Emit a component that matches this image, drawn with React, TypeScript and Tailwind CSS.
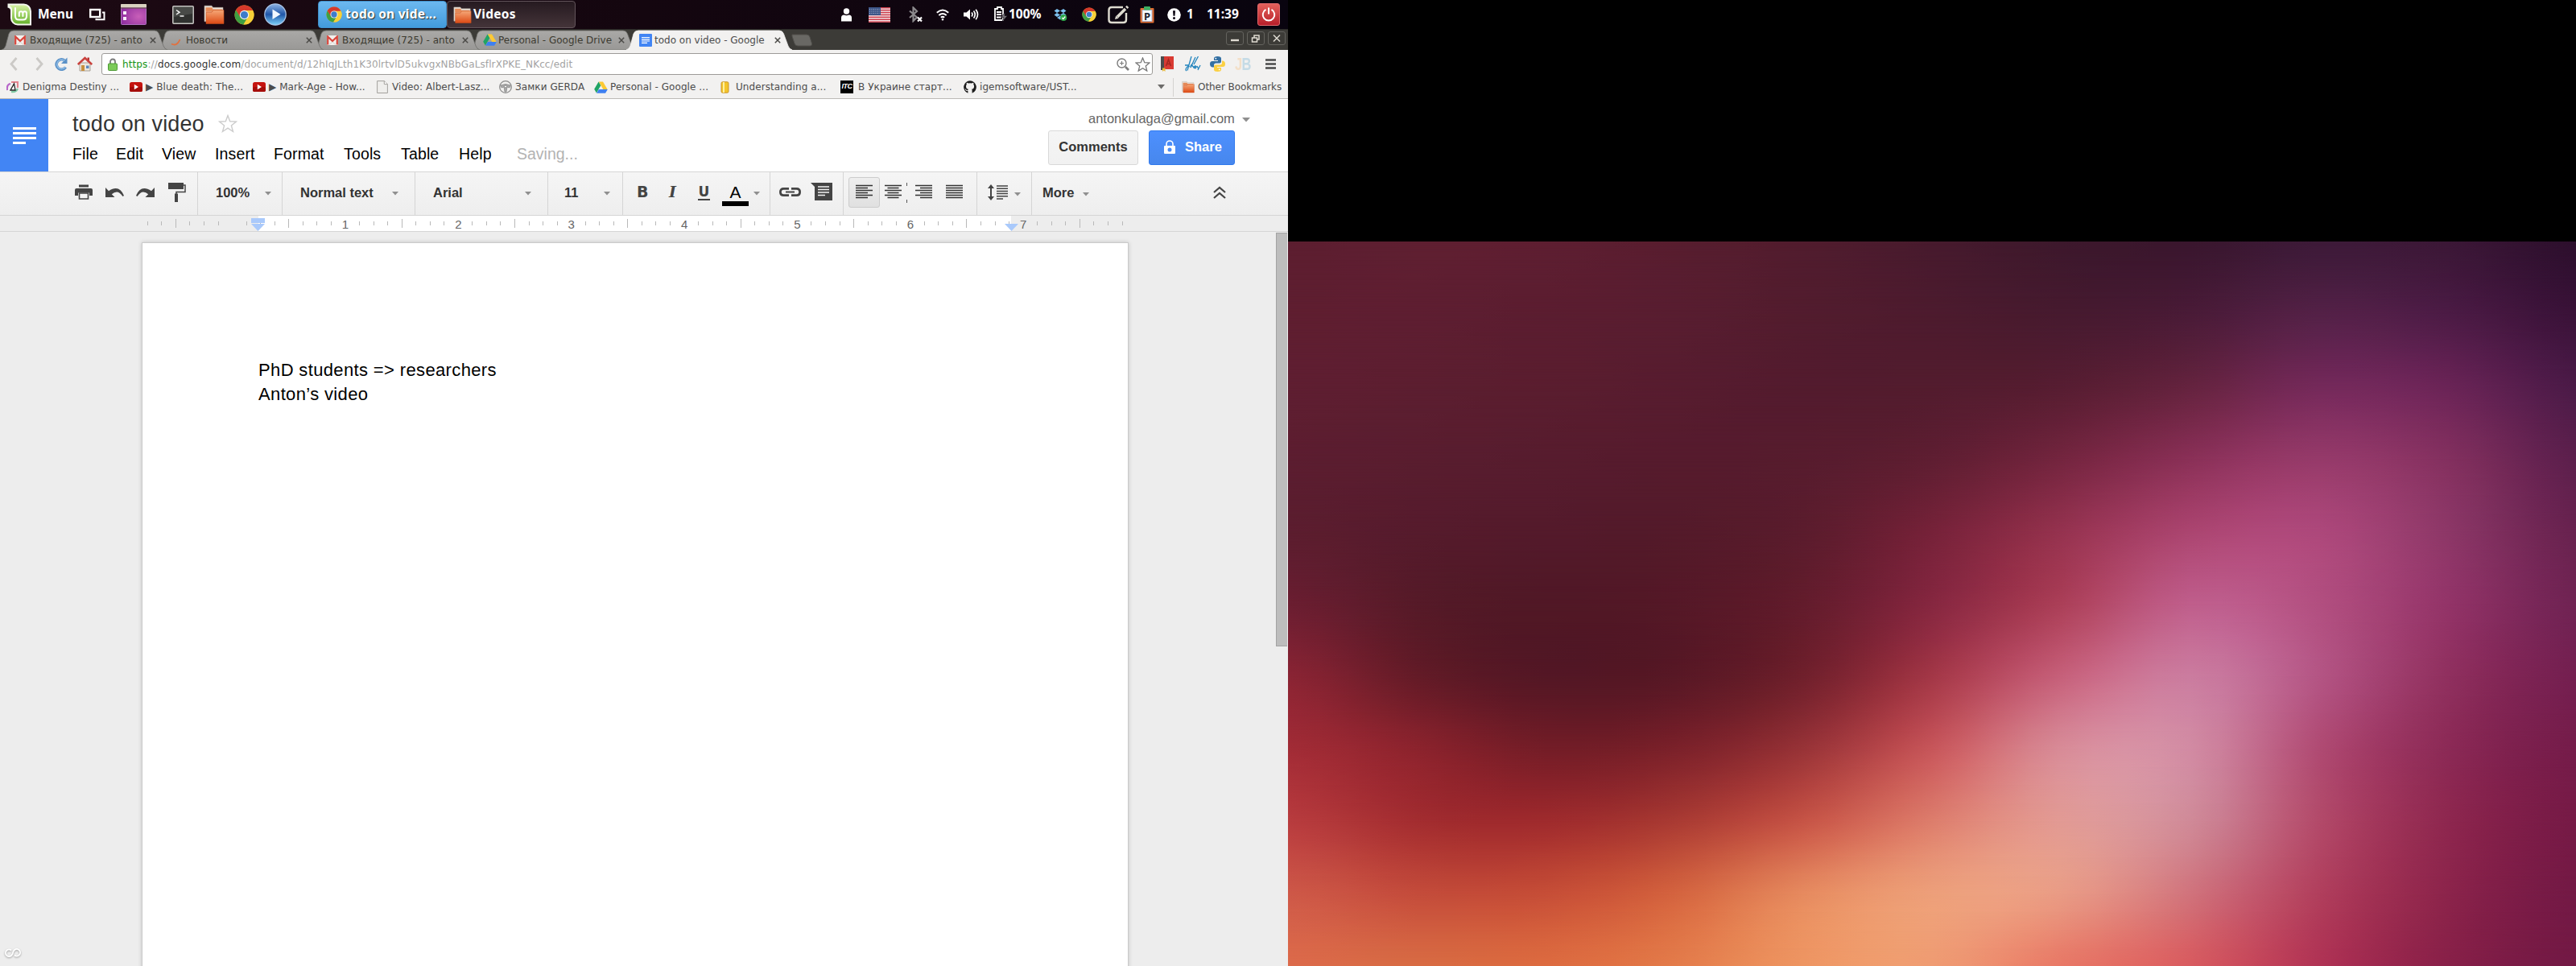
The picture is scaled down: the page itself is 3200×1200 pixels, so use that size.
import React from "react";

/* ---------- wallpaper ---------- */

const WALL: string[][] = [
  ["#5c1e30", "#5f1f31", "#5e1e31", "#581d2f", "#511c2e", "#471a2d", "#3d182c", "#3a162e", "#3d1a38", "#3b1736", "#2d0f2d"],
  ["#5f1e30", "#5e1e31", "#5b1d30", "#581d30", "#521c2e", "#4d1b2e", "#471a2f", "#4a1b37", "#542147", "#4c1b45", "#3a1238"],
  ["#5f1e31", "#5c1e30", "#5a1d2f", "#571c2f", "#531b2e", "#531c2e", "#571d32", "#65233f", "#74295a", "#6a2456", "#4b1a47"],
  ["#5c1d30", "#591d2f", "#571c2e", "#561b2d", "#571c2e", "#5f1e32", "#74253f", "#8a3057", "#963a6a", "#83305f", "#5c1f4c"],
  ["#5c1d2f", "#561b2c", "#541a2b", "#541a2a", "#5b1c2d", "#762239", "#95324f", "#ab4570", "#ad487b", "#8d3767", "#68224f"],
  ["#6b1e31", "#561a28", "#511826", "#551827", "#631c2c", "#862740", "#ab3f58", "#bf5e8b", "#b24f80", "#933468", "#702353"],
  ["#8a2434", "#641b27", "#541725", "#581825", "#70202c", "#a33747", "#c6607a", "#cb7c9f", "#b45584", "#90305f", "#741f50"],
  ["#a22c36", "#8c232d", "#741d27", "#7b212a", "#983337", "#c7565a", "#d88b97", "#d28ba3", "#b04b73", "#8c2a56", "#751c4a"],
  ["#b83c3e", "#a32d30", "#9f2b2d", "#a93a33", "#c65446", "#dd7d6c", "#e29a94", "#d08a98", "#b34a6a", "#8e274f", "#761a46"],
  ["#ce5848", "#c44c3b", "#c64e37", "#d4633f", "#e68a5f", "#ed9f7a", "#e99b85", "#d1737c", "#b13f5d", "#8c244b", "#731945"],
  ["#dc6a4a", "#d86b43", "#dd6b40", "#e37b4a", "#ee9562", "#ef9b72", "#e87866", "#d85b5f", "#b03354", "#882048", "#731945"],
];

type Rgb = number[];

const parseHex = (hex: string): Rgb => [1, 3, 5].map((i) => parseInt(hex.slice(i, i + 2), 16));

/* Catmull-Rom subdivision of a list of colours. */
function smooth(points: Rgb[], parts: number): Rgb[] {
  const last = points.length - 1;
  const out: Rgb[] = [];
  for (let i = 0; i < last; i++) {
    const a = points[Math.max(i - 1, 0)];
    const b = points[i];
    const c = points[i + 1];
    const d = points[Math.min(i + 2, last)];
    for (let s = 0; s < parts; s++) {
      const t = s / parts;
      out.push(
        b.map((_, k) => {
          const v =
            0.5 *
            (2 * b[k] +
              (c[k] - a[k]) * t +
              (2 * a[k] - 5 * b[k] + 4 * c[k] - d[k]) * t * t +
              (3 * b[k] - a[k] - 3 * c[k] + d[k]) * t * t * t);
          return Math.min(255, Math.max(0, v));
        }),
      );
    }
  }
  out.push(points[last]);
  return out;
}

const wideRows = WALL.map((row) => smooth(row.map(parseHex), 4));
const columns = wideRows[0].map((_, x) => smooth(wideRows.map((row) => row[x]), 4));
const MESH = columns[0].map((_, y) => columns.map((col) => `rgb(${col[y].map(Math.round).join(",")})`));

function Wallpaper() {
  const step = 100 / (MESH.length - 1);
  return (
    <div className="relative h-[900px] w-[1600px] overflow-hidden">
      {MESH.map((row, i) => {
        const mask =
          i === 0 ? "none" : `linear-gradient(to bottom, transparent ${(i - 1) * step}%, black ${i * step}%)`;
        return (
          <div
            key={i}
            className="absolute inset-0"
            style={{ backgroundImage: `linear-gradient(to right, ${row.join(",")})`, maskImage: mask }}
          />
        );
      })}
    </div>
  );
}

/* ---------- shared icons ---------- */

function Chrome({ size }: { size: number }) {
  return (
    <svg width={size} height={size} viewBox="0 0 48 48" className="block shrink-0">
      <circle cx="24" cy="24" r="23" fill="#e8c22c" />
      <path d="M4.1 12.5 A23 23 0 0 0 22 46.9 L33 29 L15 29 Z" fill="#3f9f43" />
      <path d="M43.9 12.5 A23 23 0 0 1 22 46.9 L33 29 L24 13.5 Z" fill="#f7d038" />
      <path d="M24 13.5 H44.3 A23 23 0 0 0 4.1 12.5 L14 29 Z" fill="#d5392b" />
      <circle cx="24" cy="24" r="11" fill="#f3f3f3" />
      <circle cx="24" cy="24" r="8.8" fill="#3d7cc9" />
    </svg>
  );
}

function Gmail() {
  return (
    <svg width="14" height="12" viewBox="0 0 14 12" className="block">
      <rect width="14" height="12" rx="1" fill="#f2efec" />
      <path d="M1.2 11.5V1.5L7 7l5.8-5.5v10" fill="none" stroke="#d8443a" strokeWidth="2.2" />
      <path d="M3 11.5L7 8l4 3.5" fill="none" stroke="#d5d0cc" strokeWidth="1" />
    </svg>
  );
}

function Drive() {
  return (
    <svg width="17" height="15" viewBox="0 0 17 15" className="block">
      <path d="M5.8 0.5h5.2L16.6 10h-5.3z" fill="#fcc934" />
      <path d="M5.6 0.6L8.3 5.2 2.9 14.5 0.2 9.8z" fill="#20a464" />
      <path d="M5.8 10h11l-2.7 4.7H3.1z" fill="#3f80f0" />
    </svg>
  );
}

function Folder({ size }: { size: number }) {
  return (
    <svg width={size} height={size} viewBox="0 0 26 24" preserveAspectRatio="none" className="block">
      <defs>
        <linearGradient id="fold" x1="0" y1="0" x2="0" y2="1">
          <stop offset="0" stopColor="#f5a777" />
          <stop offset="1" stopColor="#dd4a14" />
        </linearGradient>
      </defs>
      <path d="M1 2h9l1.5 2H24v16H1z" fill="#e9e3dc" stroke="#b5a99c" strokeWidth=".6" />
      <path d="M2.5 4h8l1 2H23v3H2.5z" fill="#e58a58" />
      <path d="M3 22V9.5h7L12 7h13v15.5H3z" fill="url(#fold)" stroke="#c9501f" strokeWidth=".6" />
    </svg>
  );
}

function YouTube() {
  return (
    <svg width="16" height="12" viewBox="0 0 16 12" className="block">
      <rect width="16" height="12" rx="2.6" fill="#c5140f" />
      <rect y="6" width="16" height="6" rx="2.6" fill="#a50d0a" />
      <path d="M5.8 2.8v6.4L11 6z" fill="#fff" />
    </svg>
  );
}

function Caret({ className = "" }: { className?: string }) {
  return (
    <svg width="8" height="5" viewBox="0 0 8 5" className={`block shrink-0 ${className}`}>
      <path d="M0 0h8L4 4.6z" fill="#8f8f8f" />
    </svg>
  );
}

/* ---------- desktop panel ---------- */

function MintLogo() {
  return (
    <svg width="31" height="28" viewBox="0 0 31 28" className="block">
      <defs>
        <linearGradient id="mint" x1="0" y1="0" x2="0" y2="1">
          <stop offset="0" stopColor="#d4f0a0" />
          <stop offset="1" stopColor="#68b32e" />
        </linearGradient>
      </defs>
      <path d="M.5.5h20a9.5 9.5 0 0 1 9.5 9.5v17.5H13A9 9 0 0 1 4 18.5V9Q4 6 .5 5.5z" fill="#f4f7ee" />
      <path d="M3 2.500h17.500a7.500 7.500 0 0 1 7.500 7.500v15.500H13A7 7 0 0 1 6 18.500V8Q6 4 3 3.500z" fill="url(#mint)" />
      <path
        d="M10 6v10q0 4.500 4.500 4.500h5q4.500 0 4.500-4.500V12.500a2.300 2.300 0 0 0-4.600 0v3.500m0-3.500a2.300 2.300 0 0 0-4.600 0v3.500"
        fill="none"
        stroke="#fff"
        strokeWidth="2"
        strokeLinecap="round"
      />
    </svg>
  );
}

function Panel() {
  return (
    <header className="flex h-9 w-[1600px] items-center bg-linear-to-r from-[#1d0a13] via-[#14060f] to-[#09040f] font-['Noto_Sans','Open_Sans',sans-serif] text-[15.500px] font-bold text-white">
      <div className="w-[47px] pl-[9px]"><MintLogo /></div>
      <div className="w-[64px]">Menu</div>
      <div className="w-[39px]">
        <svg width="20" height="17" viewBox="0 0 20 17" className="block" fill="none" stroke="#fff">
          <rect x="1.200" y="2" width="12" height="9" strokeWidth="2.400" />
          <path d="M16 5.500h2.500v8.800H8.500V13" strokeWidth="2" />
        </svg>
      </div>
      <div className="w-[64px]">
        <svg width="32" height="26" viewBox="0 0 32 26" className="block">
          <defs>
            <radialGradient id="desk" cx=".7" cy=".6" r=".8">
              <stop offset="0" stopColor="#c85fb8" />
              <stop offset="1" stopColor="#8a2a9c" />
            </radialGradient>
          </defs>
          <rect x=".5" y=".5" width="31" height="25" rx="1" fill="url(#desk)" stroke="#b070c0" />
          <rect width="32" height="4.500" rx="1" fill="#d9d2bf" />
          <rect y="4.500" width="32" height="1" fill="#5b5040" />
          <rect x="3" y="9" width="4" height="4" fill="#f7eefa" />
          <rect x="3" y="16" width="4" height="4" fill="#f7eefa" />
        </svg>
      </div>
      <div className="w-[39px]">
        <svg width="27" height="23" viewBox="0 0 27 23" className="block">
          <rect x=".8" y=".8" width="25.400" height="21.400" rx="1" fill="#30312f" stroke="#c8c8c4" strokeWidth="1.500" />
          <path d="M2 2h23v8L2 14z" fill="#484a47" />
          <path d="M5 5.500l4 2.800-4 2.700M9.500 13h5" fill="none" stroke="#f5f5f5" strokeWidth="1.500" />
        </svg>
      </div>
      <div className="w-[38px]"><Folder size={26} /></div>
      <div className="w-[37px]"><Chrome size={25} /></div>
      <div className="w-[67px]">
        <svg width="28" height="28" viewBox="0 0 28 28" className="block">
          <defs>
            <linearGradient id="play" x1="0" y1="0" x2="0" y2="1">
              <stop offset="0" stopColor="#8fb4e4" />
              <stop offset=".5" stopColor="#1f55a8" />
              <stop offset="1" stopColor="#7fd4fb" />
            </linearGradient>
          </defs>
          <circle cx="14" cy="14" r="13.200" fill="url(#play)" stroke="#a9c3e6" strokeWidth="1.300" />
          <path d="M10.500 7.500v12.500l10-6.200z" fill="#f3f8ff" />
        </svg>
      </div>
      <div className="flex h-[34px] w-[160px] items-center rounded-sm border border-[#3f8fc9] bg-linear-to-b from-[#6cb8f0] to-[#429bdc] pl-[9px] [text-shadow:1px_1px_1px_#333]">
        <Chrome size={20} />
        <span className="pl-1 tracking-[0.250px] whitespace-nowrap">todo on vide...</span>
      </div>
      <div className="flex h-[34px] w-[160px] items-center rounded-sm border border-[#63555b] bg-linear-to-b from-[#261a20] to-[#443439] pl-[7px]">
        <Folder size={23} />
        <span className="pl-[2px] tracking-[0.250px]">Videos</span>
      </div>
      <div className="flex flex-1 items-center pl-[330px]">
        <div className="w-[34px]">
          <svg width="13" height="17" viewBox="0 0 13 17" className="block" fill="#fff">
            <circle cx="6.500" cy="4" r="3.700" />
            <path d="M0 16.500V12q0-3.500 3.500-3.500 3 1.500 6 0Q13 8.500 13 12v4.500z" />
          </svg>
        </div>
        <div className="w-[50px]">
          <svg width="27" height="19" viewBox="0 0 27 19" className="block">
            <rect width="27" height="19" rx="1" fill="#f2e8ea" />
            {[0, 1, 2, 3, 4, 5, 6].map((i) => (
              <rect key={i} y={i * 2.9} width="27" height="1.500" fill="#cc3b4a" />
            ))}
            <rect width="15" height="10" fill="#3c5588" />
            <path d="M1 2.500h13M1 5h13M1 7.500h13" stroke="#a9b6d0" strokeWidth="1" strokeDasharray="1 1.500" />
          </svg>
        </div>
        <div className="w-[34px]">
          <svg width="17" height="20" viewBox="0 0 17 20" className="block" fill="none">
            <path d="M1 5.500l9 8-4.500 4.500V1.500L10 6l-9 8" stroke="#8c8a8d" strokeWidth="2.200" />
            <path d="M11 13.500l5 5m0-5l-5 5" stroke="#fff" strokeWidth="2.200" />
          </svg>
        </div>
        <div className="w-[34px]">
          <svg width="16" height="15" viewBox="0 0 16 15" className="block" fill="none" stroke="#fff" strokeWidth="2">
            <path d="M.8 4.800q7.200-6.500 14.400 0M3.300 8q4.700-4 9.400 0M5.800 10.800q2.200-1.800 4.400 0" />
            <circle cx="8" cy="13.300" r="1.200" fill="#fff" stroke="none" />
          </svg>
        </div>
        <div className="w-[38px]">
          <svg width="19" height="14" viewBox="0 0 19 14" className="block" fill="none" stroke="#fff" strokeWidth="1.700">
            <path d="M0 4.500h3.500L8 .5v13L3.500 9.500H0z" fill="#fff" stroke="none" />
            <path d="M10 4.500q2 2.500 0 5M12.500 2.500q3.500 4.500 0 9M15.200.8q4.600 6.200 0 12.400" />
          </svg>
        </div>
        <div className="w-[18px]">
          <svg width="17" height="20" viewBox="0 0 17 20" className="block">
            <path d="M4 1h5v2h2v14H1V3h3z" fill="none" stroke="#fff" strokeWidth="1.800" />
            <path d="M3 7h6M3 10h6M3 13.500h6" stroke="#fff" strokeWidth="2" />
            <path d="M13.500 7.500l-5 6h3.500l-2 5.500 6.500-7.500h-3.500z" fill="#77747a" stroke="#09040f" strokeWidth=".6" />
          </svg>
        </div>
        <div className="w-[56px]">100%</div>
        <div className="w-[35px]">
          <svg width="17" height="17" viewBox="0 0 17 17" className="block">
            <path d="M4 1l4 2.500L4 6 .5 3.500zM12 1l3.500 2.500L12 6 8 3.500zM4 6l4 2.500L4 11 .5 8.500zM12 6l3.500 2.500L12 11 8 8.500zM4 12l4-2.500 4 2.500-4 2.500z" fill="#7cc0ee" />
            <circle cx="12.200" cy="12" r="4" fill="#2fa84a" />
            <path d="M10.300 12l1.500 1.500 2.500-3" stroke="#fff" strokeWidth="1.200" fill="none" />
          </svg>
        </div>
        <div className="w-[32px]"><Chrome size={18} /></div>
        <div className="w-[40px]">
          <svg width="27" height="23" viewBox="0 0 27 23" className="block" fill="none" stroke="#dedbd0">
            <path d="M19 2H5Q1.500 2 1.500 5.500v12Q1.500 21 5 21h14.500q3.500 0 3.500-3.500V9" strokeWidth="2.400" />
            <path d="M12 14L22 4" strokeWidth="3.600" />
            <path d="M9 17l1.200-4.500 3.300 3.300z" fill="#dedbd0" stroke="none" />
            <path d="M23.300 2.700L25 1" strokeWidth="3.500" />
          </svg>
        </div>
        <div className="w-[34px]">
          <svg width="18" height="21" viewBox="0 0 18 21" className="block">
            <rect x=".5" y="2" width="17" height="18.500" rx="1" fill="#e06c30" />
            <rect x="3" y="4.500" width="12" height="14" fill="#f6fbff" stroke="#9ac" strokeWidth=".8" />
            <rect x="5" y="0" width="8" height="4.500" rx="1" fill="#3fae62" />
            <text x="5" y="17" fontSize="13" fontFamily="Noto Sans" fontWeight="700" fill="#1c2430">P</text>
          </svg>
        </div>
        <div className="w-[24px]">
          <svg width="17" height="17" viewBox="0 0 17 17" className="block">
            <circle cx="8.500" cy="8.500" r="8.300" fill="#fff" />
            <path d="M7 3.200h3l-.5 6.500h-2z" fill="#0a0410" />
            <circle cx="8.500" cy="12.500" r="1.500" fill="#0a0410" />
          </svg>
        </div>
        <div className="w-[25px]">1</div>
        <div className="w-[63px]">11:39</div>
        <div className="flex h-7 w-7 items-center justify-center rounded-[3px] border border-[#e0676b] bg-linear-to-b from-[#e4605c] to-[#b81c2a]">
          <svg width="20" height="20" viewBox="0 0 20 20" fill="none" stroke="#fff" strokeWidth="2">
            <path d="M6.500 3.800a7.300 7.300 0 1 0 7 0M10 1.500v8" />
          </svg>
        </div>
      </div>
    </header>
  );
}

/* ---------- browser window ---------- */

type TabInfo = { icon: React.ReactNode; title: string; active?: boolean };

const TABS: TabInfo[] = [
  { icon: <Gmail />, title: "Входящие (725) - anto" },
  {
    icon: (
      <svg width="14" height="14" viewBox="0 0 14 14" className="block">
        <path d="M1 11.500Q8 15 11.500 6" fill="none" stroke="#e2703f" strokeWidth="1.800" />
      </svg>
    ),
    title: "Новости",
  },
  { icon: <Gmail />, title: "Входящие (725) - anto" },
  { icon: <Drive />, title: "Personal - Google Drive" },
  {
    icon: (
      <svg width="16" height="16" viewBox="0 0 16 16" className="block">
        <rect width="16" height="16" rx="1" fill="#4285f4" />
        <path d="M3 4.500h10M3 6.800h10M3 9h10M3 11.300h7" stroke="#fff" strokeWidth="1.200" />
      </svg>
    ),
    title: "todo on video - Google",
    active: true,
  },
];

function Tab({ tab, index }: { tab: TabInfo; index: number }) {
  return (
    <div className="relative h-[25px] w-[194px] shrink-0" style={{ zIndex: tab.active ? 20 : 10 - index }}>
      <svg width="212" height="25" viewBox="0 0 212 25" className="absolute -left-1 top-0">
        <defs>
          <linearGradient id="tabg" x1="0" y1="0" x2="0" y2="1">
            <stop offset="0" stopColor="#aaa9a7" />
            <stop offset="1" stopColor="#999896" />
          </linearGradient>
        </defs>
        <path
          d="M2 25Q5.500 24 7 20L11 5Q12.500 1 17 1H192Q196 1 197.500 5L203 20Q204.500 24 208 25Z"
          fill={tab.active ? "#f2f1f0" : "url(#tabg)"}
          stroke={tab.active ? "#f2f1f0" : "#6f6e6b"}
          strokeWidth=".8"
        />
      </svg>
      <div className="relative flex h-full items-center pl-[14px]">
        <div className="w-[19px] shrink-0">{tab.icon}</div>
        <div className={`w-[142px] overflow-hidden whitespace-nowrap ${tab.active ? "text-[#4c4c4c]" : "text-[#3c3a30]"}`}>{tab.title}</div>
        <svg width="8" height="8" viewBox="0 0 8 8" className="ml-[7px] shrink-0">
          <path d="M.8.8l6.400 6.400m0-6.400L.8 7.200" stroke="#4b4a47" strokeWidth="1.500" />
        </svg>
      </div>
    </div>
  );
}

function TabStrip() {
  return (
    <div className="flex h-[26px] items-end border-t border-[#2b2a27] bg-[#3c3b37] pl-1">
      {TABS.map((t, i) => (
        <Tab key={i} tab={t} index={i} />
      ))}
      <svg width="26" height="16" viewBox="0 0 26 16" className="mb-1 ml-[9px] block">
        <path d="M1 1h18q3 0 4 3l2.500 8q.5 3-2 3H8Q5 15 4 12L1 3z" fill="#696864" stroke="#504f4b" />
      </svg>
      <div className="ml-auto flex h-full gap-1 pt-[2px] pr-[3px]">
        {["M6 10.500h10", "M6.500 7.500h6v5h-6zM9 7V4.500h6v5h-2.500", "M7 4l8 8m0-8l-8 8"].map((d) => (
          <div key={d} className="h-[17px] w-[22px] rounded-[3px] border border-[#64635e] bg-[#3c3b37]">
            <svg width="20" height="15" viewBox="1 .5 20 15" fill="none" stroke="#dfdbd2" strokeWidth={d.endsWith("h10") ? 2.4 : 1.5}>
              <path d={d} />
            </svg>
          </div>
        ))}
      </div>
    </div>
  );
}

function AddressBar() {
  return (
    <div className="flex h-[35px] items-center bg-[#f2f1f0]">
      <div className="w-8 pl-3">
        <svg width="10" height="17" viewBox="0 0 10 17" fill="none" stroke="#cbc9c6" strokeWidth="2.800"><path d="M8.500 1L2 8.500 8.500 16" /></svg>
      </div>
      <div className="w-9 pl-3">
        <svg width="10" height="17" viewBox="0 0 10 17" fill="none" stroke="#cbc9c6" strokeWidth="2.800"><path d="M1.500 1L8 8.500 1.500 16" /></svg>
      </div>
      <div className="w-[28px]">
        <svg width="16" height="17" viewBox="0 0 16 17" fill="none">
          <path d="M13.500 12.500A6.200 6.200 0 1 1 12 4" stroke="#5b91c7" strokeWidth="3.600" />
          <path d="M15.500.5v7.500H8z" fill="#5b91c7" />
          <path d="M13 12.300A5.700 5.700 0 1 1 12 4.500" stroke="#8fbbe4" strokeWidth="1.500" />
        </svg>
      </div>
      <div className="w-[30px]">
        <svg width="19" height="19" viewBox="0 0 19 19">
          <rect x="12.500" y="1.500" width="2.500" height="5" fill="#b33" />
          <path d="M3 8h13v10H3z" fill="#ece6dd" stroke="#9a8f84" strokeWidth=".8" />
          <path d="M.8 10L9.500 2l8.700 8" fill="none" stroke="#c9423d" strokeWidth="2.600" />
          <rect x="5" y="11" width="4" height="7" fill="#c7903e" />
          <rect x="11" y="11.500" width="3.500" height="3.500" fill="#5c89bd" />
        </svg>
      </div>
      <div className="flex h-[27px] w-[1306px] items-center rounded-[3px] border border-[#9d9b98] bg-white">
        <div className="w-[25px] pl-[7px]">
          <svg width="12" height="16" viewBox="0 0 12 16">
            <path d="M3 8V4.500a3 3 0 0 1 6 0V8" fill="none" stroke="#7b7b7b" strokeWidth="1.800" />
            <rect x=".5" y="7" width="11" height="8.500" rx="1" fill="#7ccb59" stroke="#4e9a35" />
          </svg>
        </div>
        <div className="flex-1 tracking-[0.110px] whitespace-nowrap text-[#a3a3a3]">
          <span className="text-[#149414]">https</span>
          <span>://</span>
          <span className="text-[#333]">docs.google.com</span>
          <span>/document/d/12hIqJLth1K30lrtvlD5ukvgxNBbGaLsflrXPKE_NKcc/edit</span>
        </div>
        <svg width="16" height="16" viewBox="0 0 16 16" fill="none" stroke="#7c7c7c" strokeWidth="1.400" className="mr-[7px]">
          <circle cx="6.500" cy="6.500" r="5.500" />
          <path d="M4 6.500h5M6.500 4v5" strokeWidth="1.200" />
          <path d="M11 11l4 4" strokeWidth="2.600" />
        </svg>
        <svg width="19" height="18" viewBox="0 0 19 18" fill="#fff" stroke="#777" strokeWidth="1.300" className="mr-[2px]">
          <path d="M9.500 1l2.300 5.700 6.200.4-4.700 4 1.500 6-5.300-3.300-5.300 3.300 1.500-6L1 7.100l6.200-.4z" />
        </svg>
      </div>
      <div className="flex flex-1 items-center pl-[10px]">
        <div className="w-[30px]">
          <svg width="16" height="19" viewBox="0 0 16 19">
            <rect width="16" height="17" fill="#d93a32" />
            <rect width="4" height="17" fill="#4c4c4c" />
            <path d="M5 16h11v2H5z" fill="#eee" />
            <path d="M6.500 12L9.500 4l3 8M7.500 9.500h4" stroke="#a52720" strokeWidth="1.600" fill="none" />
            <path d="M2 14.500h3.500V19L3.700 17.500 2 19z" fill="#e8b93c" />
          </svg>
        </div>
        <div className="w-[31px]">
          <svg width="20" height="19" viewBox="0 0 20 19" fill="none" stroke="#2284bd" strokeWidth="1.300">
            <path d="M8 0L3 17.500M0 11h5M2 18q-2-1 0-4t3.500-1M13 1L7 14q0-4 3-5M8 10l3 4M16.500 0L11 10M11 13h3q-1-2-2.500 0t2.500 1.500M15 12l1.500 3M19 11l-3 6" />
          </svg>
        </div>
        <div className="w-[31px]">
          <svg width="19" height="19" viewBox="0 0 19 19">
            <path d="M9.500 0Q5 0 5 2.500V5h5v1H3Q0 6 0 9.500T3 13.500h2V11q0-2.500 2.500-2.500h4.500Q14 8.500 14 6.500v-4Q14 0 9.500 0z" fill="#3470a3" />
            <path d="M9.500 19Q14 19 14 16.500V14H9v-1h7q3 0 3-3.500T16 5.500h-1V8q0 2.500-2.500 2.500H7Q5 10.500 5 12.500v4Q5 19 9.500 19z" fill="#fbd043" />
            <circle cx="7.300" cy="2.700" r=".9" fill="#fff" />
            <circle cx="11.700" cy="16.300" r=".9" fill="#fff" />
          </svg>
        </div>
        <div className="w-[38px] font-['Liberation_Sans',sans-serif] text-[22px] leading-none font-bold tracking-[-1px]">
          <span className="inline-block origin-left scale-x-75"><span className="text-[#f3dfc8]">J</span><span className="text-[#c5dbe6]">B</span></span>
        </div>
        <svg width="13" height="13" viewBox="0 0 13 13" stroke="#4a4a4a" strokeWidth="2.600" className="block">
          <path d="M0 1.500h13M0 6.500h13M0 11.500h13" />
        </svg>
      </div>
    </div>
  );
}

function BookmarkBar() {
  const items: [string, string, number, string, React.ReactNode][] = [
    ["w-[153px]", "Denigma Destiny ...", 1, "w-5", (
      <svg width="15" height="16" viewBox="0 0 15 16">
        <path d="M5 4Q0 5 1 12" fill="none" stroke="#b765c9" strokeWidth="2.200" />
        <path d="M6 2h8v7" fill="none" stroke="#e2858f" strokeWidth="2.200" />
        <path d="M6 14q6 1 8-4" fill="none" stroke="#7fc9a4" strokeWidth="2.200" />
        <path d="M5 12l4.500-8 1.500 8z" fill="#fff" stroke="#222" strokeWidth="1.300" />
      </svg>)],
    ["w-[153px]", "▶ Blue death: The...", 2, "w-5", <YouTube />],
    ["w-[154px]", "▶ Mark-Age - How...", 3, "w-5", <YouTube />],
    ["w-[152px]", "Video: Albert-Lasz...", 4, "w-[19px]", (
      <svg width="14" height="16" viewBox="0 0 14 16"><path d="M.6.6h9L13.400 4.500v11H.6z" fill="#efeeec" stroke="#a3a19d" /><path d="M9.300.6v4h4" fill="#fff" stroke="#a3a19d" /></svg>)],
    ["w-[118px]", "Замки GERDA", 5, "w-5", (
      <svg width="16" height="16" viewBox="0 0 16 16" fill="none" stroke="#8b8b8b"><circle cx="8" cy="8" r="7.300" strokeWidth="1.300" /><path d="M2 6q6-3 12 0l-1 3-3-1-1 6H7L6 8 3 9z" fill="#a9a9a9" strokeWidth=".8" /><circle cx="8" cy="7.500" r="1.500" fill="#fff" /></svg>)],
    ["w-[157px]", "Personal - Google ...", 6, "w-5", <Drive />],
    ["w-[149px]", "Understanding a...", 7, "w-[19px]", (
      <svg width="11" height="15" viewBox="0 0 11 15"><rect x="1" y=".8" width="9" height="13.400" rx="1.500" fill="#f4c52c" stroke="#c8932a" /><path d="M4 1v13" stroke="#fff0a0" strokeWidth="2" /></svg>)],
    ["w-[153px]", "В Украине старт...", 8, "w-[22px]", (
      <span className="flex h-4 w-4 items-center justify-center bg-black font-['Liberation_Sans',sans-serif] text-[9px] font-bold tracking-[-0.500px] text-white italic">ITC</span>)],
    ["w-[241px]", "igemsoftware/UST...", 9, "w-5", (
      <svg width="16" height="16" viewBox="0 0 16 16" fill="#1b1b1b"><path d="M8 .2a8 8 0 0 0-2.600 15.500V13q-2.500.5-3-1.200c-.3-.8-.9-1-.9-1.100.6-.4 1.500.1 1.800.7.600 1 1.500.8 2.100.5q.1-.7.500-1.100C3.800 10.600 3 9.200 3 7q0-1.200.8-2.100-.4-1.200.1-2.200.8-.1 2.200.9a7.500 7.500 0 0 1 3.900 0q1.400-1 2.200-.9.500 1 .1 2.200.8.900.8 2.100c0 2.200-1 3.600-3 3.800q.5.600.5 1.600v3.300A8 8 0 0 0 8 .2z" /></svg>)],
  ];
  return (
    <div className="flex h-[26px] items-center border-b border-[#bcbab7] bg-[#f2f1f0] pb-[3px] pl-2 text-[#4c4c4c]">
      {items.map(([w, label, key, iw, icon]) => (
        <div key={key} className={`flex shrink-0 items-center tracking-[0.070px] whitespace-nowrap ${w}`}>
          <div className={`shrink-0 ${iw}`}>{icon}</div>
          <span>{label}</span>
        </div>
      ))}
      <svg width="9" height="6" viewBox="0 0 9 6"><path d="M0 0h9L4.500 5.500z" fill="#6d6c6a" /></svg>
      <div className="ml-[10px] h-[23px] w-px bg-[#d4d2d0]" />
      <div className="flex items-center pl-[10px] tracking-[-0.050px] whitespace-nowrap">
        <div className="w-5"><Folder size={16} /></div>
        <span>Other Bookmarks</span>
      </div>
    </div>
  );
}

/* ---------- document editor ---------- */

function DocHeader() {
  return (
    <div className="flex h-[90px] bg-white">
      <div className="flex w-[60px] items-center justify-center bg-[#4285f4]">
        <svg width="29" height="21" viewBox="0 0 29 21" fill="#fff">
          <path d="M0 0h29v3H0zM0 6h29v3H0zM0 12h29v3H0zM0 18h16v3H0z" />
        </svg>
      </div>
      <div className="flex-1 pl-[30px] pt-[15px]">
        <div className="flex h-8 items-center">
          <span className="text-[27px] leading-8 tracking-[0.120px] text-[#333]">todo on video</span>
          <svg width="24" height="24" viewBox="0 0 24 24" fill="#fff" stroke="#ccc" strokeWidth="1.400" className="ml-[17px]">
            <path d="M12 1.500l2.700 7.300 7.800.3-6.100 4.800 2.100 7.600L12 17.200l-6.500 4.300 2.100-7.600L1.500 9.100l7.800-.3z" />
          </svg>
        </div>
        <div className="mt-[9px] flex h-6 text-[19.500px] leading-6 tracking-[0.150px] text-black">
          <span className="w-[54px]">File</span>
          <span className="w-[57px]">Edit</span>
          <span className="w-[66px]">View</span>
          <span className="w-[73px]">Insert</span>
          <span className="w-[87px]">Format</span>
          <span className="w-[71px]">Tools</span>
          <span className="w-[72px]">Table</span>
          <span className="w-[72px]">Help</span>
          <span className="tracking-normal text-[#b3b3b3]">Saving...</span>
        </div>
      </div>
      <div className="w-[298px] pt-[14px]">
        <div className="flex h-[22px] items-center pb-[2px] pl-[50px] text-[16.500px] leading-[20px] text-[#666]">
          antonkulaga@gmail.com
          <svg width="10" height="6" viewBox="0 0 10 6" className="mt-1 ml-[9px]"><path d="M0 0h10L5 5.500z" fill="#8f8f8f" /></svg>
        </div>
        <div className="mt-[3px] flex gap-[13px] text-[16.500px] font-bold">
          <div className="flex h-[43px] w-[112px] items-center justify-center rounded-[3px] border border-[#d9d9d9] bg-linear-to-b from-[#f5f5f5] to-[#f1f1f1] pb-[2px] text-[#333]">Comments</div>
          <div className="flex h-[43px] w-[107px] items-center rounded-[3px] border border-[#3079ed] bg-linear-to-b from-[#4d90fe] to-[#4787ed] pb-[2px] pl-[18px] text-white">
            <svg width="14" height="17" viewBox="0 0 14 17">
              <path d="M3 8V5a4 4 0 0 1 8 0v3" fill="none" stroke="#fff" strokeWidth="1.600" />
              <path fillRule="evenodd" d="M1 7h12q1 0 1 1v8q0 1-1 1H1q-1 0-1-1V8q0-1 1-1zm6 2.500a2.500 2.500 0 1 0 0 5 2.500 2.500 0 0 0 0-5z" fill="#fff" />
            </svg>
            <span className="pl-[12px]">Share</span>
          </div>
        </div>
      </div>
    </div>
  );
}

const lines = (widths: number[], align: "l" | "c" | "r", n = 21) =>
  widths
    .map((w, i) => {
      const x = align === "l" ? 0 : align === "c" ? (n - w) / 2 : n - w;
      return `M${x} ${i * 3 + 1.5}h${w}`;
    })
    .join("");

function AlignIcon({ d }: { d: string }) {
  return (
    <svg width="21" height="18" viewBox="0 0 21 18" className="block" stroke="#333" strokeWidth="1.300" fill="none">
      <path d={d} />
    </svg>
  );
}

function Toolbar() {
  const cell = "flex h-full shrink-0 items-center border-r border-[#d5d5d5]";
  return (
    <div className="flex h-[54px] border-t border-[#d5d5d5] bg-linear-to-b from-[#f5f5f5] to-[#eeeeee] text-[16.500px] font-bold text-[#333]">
      <div className={`${cell} w-[246px] pb-1 pl-[93px]`}>
        <div className="w-[38px]">
          <svg width="22" height="19" viewBox="0 0 22 19" fill="#444">
            <path d="M5 .5h12v3H5zM2 5h18q2 0 2 2v7h-4v-3.500H4V14H0V7q0-2 2-2z" />
            <path d="M5.500 11h11v7h-11z" fill="#f5f5f5" stroke="#444" strokeWidth="1.600" />
          </svg>
        </div>
        <div className="w-[38px]">
          <svg width="23" height="12" viewBox="0 0 23 12"><path d="M0 0v12h11.500L7.800 8.200Q15.500 1.500 21.500 11L23 10Q17-4.500 4 4.200z" fill="#444" /></svg>
        </div>
        <div className="w-10">
          <svg width="23" height="12" viewBox="0 0 23 12"><path d="M23 0v12H11.500L15.200 8.200Q7.500 1.500 1.500 11L0 10Q6-4.500 19 4.200z" fill="#444" /></svg>
        </div>
        <svg width="22" height="24" viewBox="0 0 22 24"><path d="M0 0h19v8H0z" fill="#444" /><path d="M19 3h2v8.500H10V14" fill="none" stroke="#444" strokeWidth="1.500" /><path d="M8 13.500h4V24H8z" fill="#444" /></svg>
      </div>
      <div className={`${cell} w-[105px] justify-between pr-[13px] pl-[22px]`}>
        <span className="pb-[2px]">100%</span>
        <Caret />
      </div>
      <div className={`${cell} w-[165px] justify-between pr-[20px] pl-[22px]`}>
        <span className="pb-[3px]">Normal text</span>
        <Caret />
      </div>
      <div className={`${cell} w-[165px] justify-between pr-[20px] pl-[22px]`}>
        <span className="pb-[3px]">Arial</span>
        <Caret />
      </div>
      <div className={`${cell} w-[93px] justify-between pr-[15px] pl-[20px]`}>
        <span className="pb-[2px]">11</span>
        <Caret />
      </div>
      <div className={`${cell} w-[183px] pl-[17px]`}>
        <span className="w-[40px] pb-1 font-['DejaVu_Sans',sans-serif] text-[19px] leading-none text-[#444]">B</span>
        <span className="w-[36px] pb-1 font-['DejaVu_Serif',serif] text-[19px] leading-none text-[#444] italic">I</span>
        <span className="w-[30px] pb-[2px]">
          <span className="flex w-[15px] justify-center border-b-2 border-[#444] font-['DejaVu_Sans',sans-serif] text-[17px] leading-[17px] text-[#444]">U</span>
        </span>
        <span className="flex w-[33px] flex-col items-center pt-[2px] font-normal text-black">
          <span className="text-[21px] leading-[22px]">A</span>
          <span className="h-[6px] w-full bg-black" />
        </span>
        <Caret className="ml-[6px]" />
      </div>
      <div className={`${cell} w-[91px] pb-1 pl-[11px]`}>
        <div className="w-[39px]">
          <svg width="27" height="11" viewBox="0 0 27 11" fill="none" stroke="#444" strokeWidth="2.800">
            <path d="M12 1.400H5.500Q1.400 1.400 1.400 5.500t4.100 4.100H12M15 1.400h6.500q4.100 0 4.100 4.100t-4.100 4.100H15" />
            <path d="M8 5.500h11" strokeWidth="2" />
          </svg>
        </div>
        <svg width="27" height="22" viewBox="0 0 27 22" className="mb-[2px]">
          <path d="M0 0h27v22H5V5z" fill="#444" />
          <path d="M9 5h14M9 8.500h14M9 12h14M9 15.500h9" stroke="#f3f3f3" strokeWidth="1.500" />
        </svg>
      </div>
      <div className={`${cell} w-[166px] pb-[3px] pl-[6px]`}>
        <div className="flex h-[38px] w-[39px] items-center justify-center rounded-[3px] border border-[#ccc] bg-linear-to-b from-[#eee] to-[#e0e0e0] pb-[3px]">
          <AlignIcon d={lines([21, 15, 21, 15, 21, 15], "l")} />
        </div>
        <div className="w-[33px] pb-[3px] pl-[6px]"><AlignIcon d={lines([21, 14, 21, 14, 21, 14], "c")} /></div>
        <div className="flex h-[25px] w-[11px] flex-col justify-between">
          <span className="h-1 w-px bg-[#555]" />
          <span className="h-1 w-px bg-[#555]" />
        </div>
        <div className="w-[38px] pb-[3px]"><AlignIcon d={lines([21, 15, 21, 15, 21, 15], "r")} /></div>
        <div className="pb-[3px]"><AlignIcon d={lines([21, 21, 21, 21, 21, 21], "l")} /></div>
      </div>
      <div className={`${cell} w-[68px] pb-1 pl-[13px]`}>
        <svg width="25" height="20" viewBox="0 0 25 20" fill="none" stroke="#444" strokeWidth="1.500">
          <path d="M4 3v14" strokeWidth="2" />
          <path d="M0 5l4-5 4 5zM0 15l4 5 4-5z" fill="#444" stroke="none" />
          <path d="M11 2h14M11 5.200h14M11 8.400h14M11 11.600h14M11 14.800h14M11 18h8" />
        </svg>
        <Caret className="mt-[5px] ml-[8px]" />
      </div>
      <div className="flex flex-1 items-center pb-[3px] pl-[13px]">
        More
        <Caret className="mt-[4px] ml-[11px]" />
        <svg width="16" height="16" viewBox="0 0 16 16" fill="none" stroke="#444" strokeWidth="2.200" className="mr-[77px] ml-auto">
          <path d="M1 8l7-6 7 6M1 15l7-6 7 6" />
        </svg>
      </div>
    </div>
  );
}

function Ruler() {
  const ticks = Array.from({ length: 70 }, (_, i) => i - 6);
  return (
    <div className="relative h-[21px] border-t border-b border-[#d5d5d5] bg-[#ededed]">
      <div className="ml-[321px] h-full w-[935px] bg-white" />
      <div className="absolute inset-0 flex items-center pl-[174.500px]">
        {ticks.map((k) => (
          <div key={k} className="flex w-[17.550px] shrink-0 justify-center">
            {k % 8 === 0 ? (
              <span className="h-[18px] text-[15px] leading-[20px] text-[#666]">{k > 0 ? k / 8 : ""}</span>
            ) : Math.abs(k % 8) === 4 ? (
              <span className="h-[11px] w-px bg-[#b9b9b9]" />
            ) : (
              <span className="h-[5px] w-px bg-[#b9b9b9]" />
            )}
          </div>
        ))}
      </div>
      <svg width="17" height="17" viewBox="0 0 17 17" className="absolute top-[3px] left-[312px]">
        <path d="M0 0h17v6H0zM0 7h17L8.500 16z" fill="#a9c9fb" />
      </svg>
      <svg width="17" height="9" viewBox="0 0 17 9" className="absolute top-[10px] left-[1248px]">
        <path d="M0 0h17L8.500 9z" fill="#a9c9fb" />
      </svg>
    </div>
  );
}

function Workspace() {
  return (
    <div className="relative flex h-[912px] bg-[#ededed] pt-[13px] pl-[176px]">
      <div className="h-[960px] w-[1226px] border border-[#cacaca] bg-white pt-[143px] pl-[144px] text-[22px] leading-[30px] tracking-[0.360px] text-black shadow-[0_0_5px_rgba(0,0,0,0.18)]">
        <p>PhD students =&gt; researchers</p>
        <p>Anton’s video</p>
      </div>
      <div className="absolute top-[1px] right-px h-[514px] w-[14px] border border-r-0 border-[#a3a3a3] bg-[#bdbdbd]" />
      <svg width="22" height="16" viewBox="0 0 22 16" fill="none" className="absolute bottom-[8px] left-[5px] drop-shadow-[0_1px_1px_rgba(0,0,0,0.35)]">
        <path d="M9 4.500a4.300 4.300 0 1 0 0 6.500Q11 9 11 7.500T13 4a4.300 4.300 0 1 1 0 6.500" stroke="#fff" strokeWidth="1.800" />
      </svg>
    </div>
  );
}

export default function App() {
  return (
    <div className="flex h-[1200px] w-[3200px] overflow-hidden bg-black font-['Liberation_Sans',Arial,sans-serif]">
      <div className="flex h-[1200px] w-[1600px] flex-col overflow-hidden">
        <Panel />
        <div className="font-['DejaVu_Sans',sans-serif] text-[12px]">
          <TabStrip />
          <AddressBar />
          <BookmarkBar />
        </div>
        <DocHeader />
        <Toolbar />
        <Ruler />
        <Workspace />
      </div>
      <div className="flex h-[1200px] w-[1600px] flex-col justify-end bg-black">
        <Wallpaper />
      </div>
    </div>
  );
}
